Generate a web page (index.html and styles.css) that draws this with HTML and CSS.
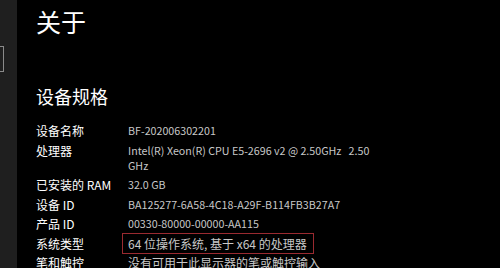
FILE: index.html
```html
<!DOCTYPE html>
<html lang="zh-CN">
<head>
<meta charset="utf-8">
<title>关于</title>
<link rel="stylesheet" href="styles.css">
</head>
<body>
<div class="app">
  <aside class="sidebar">
    <div class="search-edge"></div>
  </aside>
  <main class="content">
    <h1 class="title">关于</h1>
    <h2 class="section">设备规格</h2>
    <dl class="specs">
      <div class="row"><dt>设备名称</dt><dd class="latin">BF-202006302201</dd></div>
      <div class="row"><dt>处理器</dt><dd class="latin">Intel(R) Xeon(R) CPU E5-2696 v2 @ 2.50GHz&nbsp;&nbsp; 2.50 GHz</dd></div>
      <div class="row"><dt>已安装的 RAM</dt><dd class="latin">32.0 GB</dd></div>
      <div class="row"><dt>设备 ID</dt><dd class="latin">BA125277-6A58-4C18-A29F-B114FB3B27A7</dd></div>
      <div class="row"><dt>产品 ID</dt><dd class="latin">00330-80000-00000-AA115</dd></div>
      <div class="row"><dt>系统类型</dt><dd><span class="highlight">64 位操作系统, 基于 x64 的处理器</span></dd></div>
      <div class="row"><dt>笔和触控</dt><dd>没有可用于此显示器的笔或触控输入</dd></div>
    </dl>
  </main>
</div>
</body>
</html>
```
FILE: styles.css
```css
html, body {
  margin: 0;
  padding: 0;
  background: #000;
  height: 100%;
  overflow: hidden;
}

body {
  font-family: "Noto Sans CJK SC", "Noto Sans", sans-serif;
  color: #fff;
}

.app {
  display: flex;
  height: 268px;
}

.sidebar {
  width: 17px;
  flex: none;
  background: #1f1f1f;
}

.search-edge {
  margin-top: 46px;
  width: 3px;
  height: 24px;
  border: 1px solid #8a8a8a;
  border-left: none;
}

.content {
  padding-left: 19px;
  padding-top: 5px;
  flex: 1;
}

.title {
  margin: 0;
  font-size: 25px;
  font-weight: 400;
  line-height: 32px;
}

.section {
  margin: 47px 0 0;
  font-size: 18px;
  font-weight: 400;
  line-height: 24px;
}

.specs {
  margin: 15px 0 0;
  display: flex;
  flex-direction: column;
  gap: 4.5px;
  font-size: 12px;
  line-height: 15px;
}

.row {
  display: flex;
}

.row dt {
  width: 92px;
  flex: none;
  color: #fff;
}

.row dd {
  margin: 0;
  width: 255px;
  color: #c8c8c8;
}

.row dd.latin {
  font-size: 10.7px;
}

.highlight {
  display: inline-block;
  margin: -3px 0 -3px -6px;
  padding: 2px 6px 2px 5px;
  border: 1px solid #9a2a30;
  white-space: nowrap;
}
```
